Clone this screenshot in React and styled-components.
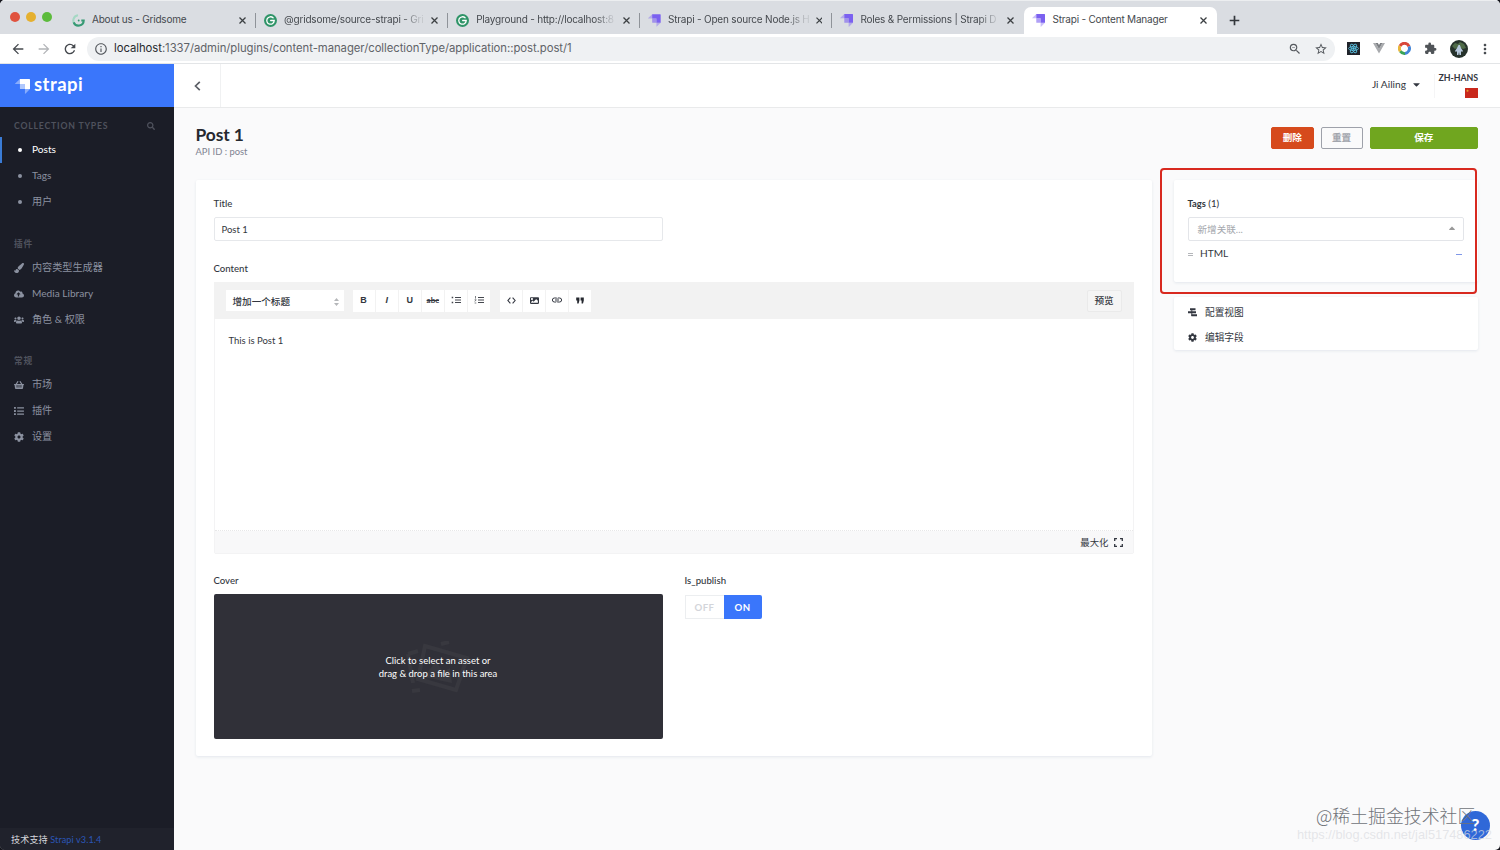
import React from 'react';
import styled, { createGlobalStyle, css } from 'styled-components';
import {
  FaCaretDown,
  FaCaretUp,
  FaCloudUploadAlt,
  FaCog,
  FaImage,
  FaList,
  FaPaintBrush,
  FaSearch,
  FaShoppingBasket,
  FaUsers,
} from 'react-icons/fa';
import {
  MdArrowBack,
  MdArrowForward,
  MdExtension,
  MdInfoOutline,
  MdMoreVert,
  MdRefresh,
  MdStarBorder,
  MdZoomOut,
} from 'react-icons/md';

const GlobalStyle = createGlobalStyle`
  * {
    box-sizing: border-box;
  }

  body {
    margin: 0;
    background: #14151c;
    overflow: hidden;
  }

  button {
    margin: 0;
    padding: 0;
    border: 0;
    background: none;
    font: inherit;
    color: inherit;
  }
`;

const Window = styled.div`
  display: flex;
  flex-direction: column;
  position: relative;
  width: 1500px;
  height: 850px;
  overflow: hidden;
  border-radius: 5px;
  background: #fafafb;
  font-family: Lato, 'Noto Sans CJK SC', sans-serif;
  font-size: 10.2px;
  line-height: 1.25;
  color: #333740;
`;

/* Browser chrome */

const TabStrip = styled.div`
  display: flex;
  align-items: flex-end;
  flex-shrink: 0;
  height: 34px;
  padding-left: 15px;
  border-top: 1px solid #eceef0;
  background: #dadde2;
  font-family: Inter, sans-serif;
`;

const Lights = styled.div`
  display: flex;
  gap: 6px;
  width: 48px;
  height: 22px;
  margin-left: -5px;
  margin-right: 6px;
`;

const Light = styled.i`
  width: 10px;
  height: 10px;
  border-radius: 50%;
  background: ${({ color }) => color};
`;

const TabBox = styled.div`
  display: flex;
  align-items: center;
  position: relative;
  width: 192.1px;
  height: 27px;
  padding: 0 10px 1px 8px;
  font-size: 10px;
  color: #45494e;

  &::after {
    content: '';
    position: absolute;
    right: 0;
    top: 6px;
    width: 1px;
    height: 15px;
    background: ${({ $line }) => ($line ? '#8f9399' : 'transparent')};
  }

  ${({ $active }) =>
    $active &&
    css`
      border-radius: 7px 7px 0 0;
      background: #fff;
    `}
`;

const TabTitle = styled.span`
  flex: 1;
  margin-left: 7px;
  margin-right: 6px;
  padding-bottom: 1px;
  white-space: nowrap;
  letter-spacing: -0.2px;
  mask-image: ${({ $fade }) =>
    $fade ? 'linear-gradient(to right, #000 84%, rgba(0, 0, 0, 0.15) 97%)' : 'none'};
`;

const NewTab = styled.svg`
  margin: 0 0 8px 12px;
`;

const AddressBar = styled.div`
  display: flex;
  align-items: center;
  flex-shrink: 0;
  height: 30px;
  padding: 0 10px;
  border-bottom: 1px solid #e3e5e7;
  background: #fff;
  color: #45494e;

  & > svg {
    flex-shrink: 0;
    width: 16px;
    height: 16px;
    margin-right: 10px;
  }
`;

const Omnibox = styled.div`
  display: flex;
  align-items: center;
  flex: 0 0 1248px;
  height: 24px;
  margin-left: -1px;
  padding: 0 7px;
  border-radius: 12px;
  background: #eff1f3;
  font-family: Inter, sans-serif;

  svg {
    width: 14px;
    height: 14px;
    color: #55595e;
  }
`;

const Url = styled.span`
  flex: 1;
  margin-left: 6px;
  font-size: 11.3px;
  letter-spacing: -0.04px;
  color: #5f6368;

  b {
    font-weight: 400;
    color: #26292c;
  }
`;

const Extensions = styled.div`
  display: flex;
  align-items: center;
  flex-shrink: 0;
  gap: 13px;
  margin-left: 12px;

  & > svg {
    display: block;
  }
`;

/* Strapi layout */

const Body = styled.div`
  display: flex;
  flex: 1;
  min-height: 0;
`;

const Sidebar = styled.nav`
  display: flex;
  flex-direction: column;
  flex-shrink: 0;
  width: 174px;
  background: #1b1d27;
`;

const Brand = styled.div`
  display: flex;
  align-items: center;
  height: 43px;
  padding: 1px 0 0 15px;
  background: #3a76fb;
`;

const BrandName = styled.span`
  margin: -3px 0 0 4px;
  font-family: Lato, sans-serif;
  font-size: 18.5px;
  font-weight: 700;
  letter-spacing: 0.45px;
  color: #fff;
`;

const MenuTitle = styled.div`
  display: flex;
  align-items: center;
  justify-content: space-between;
  height: 23px;
  margin-top: ${({ $top }) => $top}px;
  padding: 1px 19px 0 14px;
  font-size: 8.7px;
  font-weight: 700;
  letter-spacing: 0.8px;
  color: #4f525d;
`;

const MenuItem = styled.div`
  display: flex;
  align-items: center;
  height: 26px;
  padding: 0 0 2px 12px;
  border-left: 2px solid ${({ $active }) => ($active ? '#3a7bd5' : 'transparent')};
  font-size: 10.15px;
  color: ${({ $active }) => ($active ? '#fff' : '#8b91a0')};

  svg {
    position: relative;
    top: 1px;
    width: 10px;
    height: 10px;
  }
`;

const MenuIcon = styled.span`
  display: flex;
  align-items: center;
  width: 18px;
`;

const Dot = styled.i`
  width: 4px;
  height: 4px;
  margin: 1px 0 0 3.5px;
  border-radius: 50%;
  background: currentColor;
`;

const SideFooter = styled.div`
  height: 22px;
  margin-top: auto;
  padding-left: 11px;
  background: #20222c;
  line-height: 23px;
  font-size: 9.1px;
  letter-spacing: 0.1px;
  color: #d5d7dc;

  a {
    color: #2b56b8;
  }
`;

const Main = styled.main`
  flex: 1;
  min-width: 0;
`;

const TopBar = styled.header`
  display: flex;
  align-items: center;
  height: 44px;
  padding-right: 22px;
  border-bottom: 1px solid #e9eaeb;
  background: #fff;
`;

const BackButton = styled.button`
  display: flex;
  align-items: center;
  justify-content: center;
  width: 47px;
  height: 43px;
  border-right: 1px solid #f0f1f2;
`;

const UserMenu = styled.div`
  display: flex;
  align-items: center;
  gap: 5px;
  height: 24px;
  margin-left: auto;
  padding: 0 12px 2px 0;
  border-right: 1px solid #f5f5f6;
`;

const Locale = styled.div`
  display: flex;
  flex-direction: column;
  align-items: flex-end;
  gap: 5px;
  width: 43px;
  font-size: 8.8px;
  font-weight: 700;
  line-height: 10px;
  letter-spacing: -0.05px;
  white-space: nowrap;
`;

const Page = styled.div`
  padding: 17px 22px 0 21.5px;
`;

const PageHead = styled.div`
  display: flex;
  justify-content: space-between;
  height: 55px;
`;

const PageTitle = styled.h1`
  margin: 0;
  font-size: 17.4px;
  font-weight: 700;
  line-height: 19px;
  letter-spacing: -0.1px;
  color: #25282f;
`;

const PageSub = styled.div`
  font-size: 9.4px;
  line-height: 15px;
  color: #7f8391;
`;

const Actions = styled.div`
  display: flex;
  gap: 7px;
  padding-top: 2px;
`;

const Action = styled.button`
  width: ${({ $width }) => $width}px;
  height: 22px;
  border: 1px solid ${({ $border, $bg }) => $border || $bg};
  border-radius: 2px;
  background: ${({ $bg }) => $bg};
  font-size: 9.6px;
  font-weight: 700;
  line-height: 18px;
  color: ${({ $color }) => $color || '#fff'};
`;

const Columns = styled.div`
  display: flex;
  align-items: flex-start;
  gap: 22px;
`;

const Card = styled.section`
  border-radius: 2px;
  background: #fff;
  box-shadow: 0 1px 3px #e3e7ec;
`;

const FormCard = styled(Card)`
  flex: 1;
  height: 576px;
  padding: 17px 18px 0;
`;

const Label = styled.div`
  height: 20px;
  font-size: 9.6px;
  font-weight: 500;
  line-height: 13px;

  b {
    font-size: 9.4px;
  }
`;

const TextInput = styled.div`
  width: 449px;
  height: 24px;
  margin-bottom: 21px;
  padding: 0 7px;
  border: 1px solid #e6e8eb;
  border-radius: 2px;
  font-size: 9.5px;
  line-height: 23px;
`;

const Editor = styled.div`
  height: 272px;
  margin-bottom: 20px;
  border: 1px solid #f3f3f4;
  border-radius: 2px;
`;

const EditorBar = styled.div`
  display: flex;
  align-items: center;
  height: 37px;
  margin: -1px -1px 0;
  padding: 0 12px 0 12px;
  background: #f2f2f2;
`;

const HeadingSelect = styled.div`
  display: flex;
  align-items: center;
  justify-content: space-between;
  width: 118px;
  height: 21px;
  margin-right: 9px;
  padding: 3px 5px 0 7px;
  background: #fff;
  font-size: 9.6px;
  font-weight: 500;
`;

const ToolGroup = styled.div`
  display: flex;
  gap: 1px;
  margin-right: 10px;
`;

const Tool = styled.button`
  display: flex;
  align-items: center;
  justify-content: center;
  width: 22.1px;
  height: 22px;
  padding-bottom: 1px;
  background: #fff;
`;

const Glyph = styled.span`
  padding-top: 1px;
  font-family: 'Liberation Sans', sans-serif;
  font-size: 9px;
  font-weight: 700;
  font-style: ${({ $italic }) => ($italic ? 'italic' : 'normal')};
`;

const Strike = styled.span`
  font-weight: 700;
  font-size: 8px;
  text-decoration: line-through;
`;

const Preview = styled.button`
  width: 35px;
  height: 22px;
  margin-left: auto;
  border: 1px solid #eaeaea;
  border-radius: 2px;
  background: #f5f5f5;
  font-size: 9.6px;
  font-weight: 500;
`;

const EditorText = styled.div`
  height: 212px;
  padding: 16px 14px;
  border-bottom: 1px dotted #e7e7e8;
  font-size: 9.5px;
`;

const EditorFoot = styled.div`
  display: flex;
  align-items: center;
  justify-content: flex-end;
  gap: 5px;
  height: 22px;
  padding: 1px 10px 0 0;
  background: #f8f8f9;
  font-size: 9.4px;
`;

const Pair = styled.div`
  display: flex;
  gap: 22px;
`;

const Field = styled.div`
  flex: 0 0 449px;
`;

const DropZone = styled.div`
  display: flex;
  align-items: center;
  justify-content: center;
  position: relative;
  height: 145px;
  border-radius: 2px;
  background: #303038;
  font-size: 9.45px;
  line-height: 13px;
  text-align: center;
  color: #fff;

  svg {
    position: absolute;
    left: 190px;
    top: 47px;
  }

  span {
    position: relative;
  }
`;

const Toggle = styled.div`
  display: flex;
  width: 77px;
  height: 24px;
  margin-top: 0.5px;
  font-size: 9.6px;
  font-weight: 700;
  letter-spacing: 0.5px;
  text-align: center;
`;

const ToggleOff = styled.span`
  flex: 1;
  border: 1px solid #eceef0;
  border-right: 0;
  line-height: 23px;
  color: #d3d5da;
`;

const ToggleOn = styled.span`
  flex: 1;
  border-radius: 0 2px 2px 0;
  background: #3a76fb;
  line-height: 25px;
  color: #fff;
`;

const Aside = styled.aside`
  display: flex;
  flex-direction: column;
  flex-shrink: 0;
  gap: 15px;
  position: relative;
  width: 304.5px;
`;

const RelationCard = styled(Card)`
  height: 102px;
  padding: 17px 14px 0;
`;

const RelationSelect = styled.div`
  display: flex;
  align-items: center;
  justify-content: space-between;
  height: 24px;
  padding: 1px 6px 0 9px;
  border: 1px solid #e3e5e9;
  border-radius: 2px;
  font-size: 9.6px;
  color: #a4a7ad;

  svg {
    width: 10px;
    height: 10px;
    margin-top: -3px;
    color: #999;
  }
`;

const RelationRow = styled.div`
  display: flex;
  align-items: center;
  height: 25px;
  padding-right: 2.5px;
  font-size: 10.1px;
`;

const Grip = styled.i`
  width: 5px;
  height: 3px;
  margin: 2px 7.5px 0 0;
  border-top: 1px solid #b4b6ba;
  border-bottom: 1px solid #b4b6ba;
`;

const Minus = styled.i`
  width: 6px;
  height: 1.5px;
  margin: 2px 0 0 auto;
  background: #7f97e8;
`;

const LinksCard = styled(Card)`
  height: 53px;
  padding-top: 3px;
`;

const LinkRow = styled.div`
  display: flex;
  align-items: center;
  gap: 8px;
  height: 25px;
  padding-left: 14.5px;
  font-size: 9.7px;

  svg {
    width: 9px;
    height: 9px;
  }
`;

/* Overlays */

const Highlight = styled.div`
  position: absolute;
  left: -14px;
  top: -12px;
  width: 317px;
  height: 126px;
  border: 2px solid #d8291f;
  border-radius: 4px;
`;

const Help = styled.div`
  position: absolute;
  left: 1461px;
  top: 811px;
  width: 29px;
  height: 29px;
  border-radius: 50%;
  background: #2f68d8;
  font-size: 17px;
  font-weight: 900;
  line-height: 28px;
  text-align: center;
  color: #fff;
`;

const Watermark = styled.div`
  position: absolute;
  left: 1316px;
  top: 803px;
  font-family: 'Noto Sans CJK SC', sans-serif;
  font-size: 17.9px;
  font-weight: 300;
  line-height: 24px;
  white-space: nowrap;
  color: #707379;
`;

const WatermarkUrl = styled.div`
  position: absolute;
  left: 1297px;
  top: 828px;
  font-family: 'Liberation Sans', sans-serif;
  font-size: 12.8px;
  line-height: 14px;
  white-space: nowrap;
  color: rgba(218, 220, 225, 0.7);
`;

function StrapiMark({ color, size = 13 }) {
  return (
    <svg width={size} height={size} viewBox="0 0 14 14" fill={color}>
      <path d="M4.6 0H13.4Q14 0 14 .6V9.4H9.3V4.7H4.6z" />
      <path d="M4.6 0V4.7H.3Q-.2 4.7.2 4.3z" opacity=".4" />
      <path d="M4.6 4.7H9.3V9.4H5.2Q4.6 9.4 4.6 8.8z" opacity=".6" />
      <path d="M9.3 9.4H14L9.7 13.7Q9.3 14 9.3 13.5z" opacity=".4" />
    </svg>
  );
}

function GridsomeMark({ solid }) {
  if (solid) {
    return (
      <svg width="13" height="13" viewBox="0 0 14 14">
        <circle cx="7" cy="7" r="7" fill="#2f9468" />
        <path d="M9.8 4.1A4 4 0 1 0 11 7H7.2" fill="none" stroke="#fff" strokeWidth="1.4" strokeLinecap="round" />
      </svg>
    );
  }
  return (
    <svg width="13" height="13" viewBox="0 0 14 14" fill="none" strokeWidth="2.3">
      <path d="M6.5 1.4A5.6 5.6 0 0 0 3.6 11.4" stroke="#a5d8c4" />
      <path d="M1.8 9A5.6 5.6 0 0 0 12.6 7H10" stroke="#379a74" />
      <circle cx="7.2" cy="7" r="1" fill="#379a74" stroke="none" />
    </svg>
  );
}

function TabClose() {
  return (
    <svg width="7" height="7" viewBox="0 0 7 7" stroke="#3c4043" strokeWidth="1.3">
      <path d="M.5.5L6.5 6.5M6.5.5L.5 6.5" />
    </svg>
  );
}

function ExtensionIcons() {
  return (
    <Extensions>
      <svg width="13" height="13" viewBox="0 0 13 13" fill="none" stroke="#5cc5e4" strokeWidth=".8">
        <rect width="13" height="13" fill="#20232a" stroke="none" />
        <ellipse cx="6.5" cy="6.5" rx="5" ry="2" />
        <ellipse cx="6.5" cy="6.5" rx="5" ry="2" transform="rotate(60 6.5 6.5)" />
        <ellipse cx="6.5" cy="6.5" rx="5" ry="2" transform="rotate(120 6.5 6.5)" />
        <circle cx="6.5" cy="6.5" r=".9" fill="#5cc5e4" />
      </svg>
      <svg width="12" height="11" viewBox="0 0 12 11">
        <path d="M0 0h2.6L6 6 9.4 0H12L6 10.6z" fill="#a9abae" />
        <path d="M2.6 0H4.8L6 2 7.2 0H9.4L6 6z" fill="#7c7f83" />
      </svg>
      <svg width="13" height="13" viewBox="0 0 13 13" fill="none" strokeWidth="3">
        <path d="M2 4A5 5 0 0 1 11 4.3" stroke="#d9483b" />
        <path d="M11 4.3A5 5 0 0 1 7 11.4" stroke="#4285d8" />
        <path d="M7 11.4A5 5 0 0 1 2.3 9.2" stroke="#39a356" />
        <path d="M2.3 9.2A5 5 0 0 1 2 4" stroke="#e9b63a" />
      </svg>
      <MdExtension size="13" color="#505458" />
      <svg width="18" height="18" viewBox="0 0 18 18">
        <circle cx="9" cy="9" r="9" fill="#26322b" />
        <path d="M2 6l3-3 3 1 2-2 4 2 2 4-3 1-4-2-4 2z" fill="#4f6b48" />
        <path d="M7 8l1.5-3h1.4L11 8l2 3-1 1-1-1v4H9.5L9 12l-.6 3H7v-4l-1 1-1-1z" fill="#b6c8dc" />
      </svg>
      <MdMoreVert size="16" style={{ marginLeft: -4 }} />
    </Extensions>
  );
}

// Small line icons of the editor toolbar
function BulletIcon({ ordered }) {
  return (
    <svg width="10" height="8" viewBox="0 0 10 8" fill="none" stroke="#44474e">
      <path d="M4 1.5H10M4 4H10M4 6.5H10" strokeWidth="1" />
      {ordered ? (
        <path d="M1.5 0V2.6M.6 3.8H2.2L.8 5.5M.6 7H2.3" strokeWidth=".7" />
      ) : (
        <path d="M.7 1.5H2.2M.7 6.5H2.2" strokeWidth="1.4" />
      )}
    </svg>
  );
}

function CodeIcon() {
  return (
    <svg width="9" height="7" viewBox="0 0 9 7" fill="none" stroke="#333740" strokeWidth="1.1">
      <path d="M3.4.7L.9 3.5l2.5 2.8M5.6.7L8.1 3.5 5.6 6.3" />
    </svg>
  );
}

function LinkIcon() {
  return (
    <svg width="10" height="6" viewBox="0 0 10 6" fill="none" stroke="#333740" strokeWidth="1">
      <path d="M4.2 1H2.4a2 2 0 0 0 0 4H4.2M5.8 1H7.6a2 2 0 0 1 0 4H5.8M3 3H7" />
      <path d="M4.2 1Q5 1 5.4 1.7M5.8 5Q5 5 4.6 4.3" />
    </svg>
  );
}

function QuoteIcon() {
  return (
    <svg width="8" height="7" viewBox="0 0 8 7" fill="#25282f">
      <path d="M.2.4H3.4V3.4L2.6 6.6H1.2V3.4H.2zM4.6.4H7.8V3.4L7 6.6H5.6V3.4H4.6z" />
    </svg>
  );
}

function LayoutIcon() {
  return (
    <svg width="9" height="9" viewBox="0 0 9 9" stroke="#333740" strokeWidth="1.9">
      <path d="M2 1.3H7.5M0 4.2H5.5M3.4 4.2H8M3.4 7.3H9" />
      <path d="M3.8 1V8" strokeWidth=".9" />
    </svg>
  );
}

const tabs = [
  { title: 'About us - Gridsome', icon: <GridsomeMark />, line: true },
  { title: '@gridsome/source-strapi - Gri', icon: <GridsomeMark solid />, line: true, fade: true },
  { title: 'Playground - http://localhost:8', icon: <GridsomeMark solid />, line: true, fade: true },
  { title: 'Strapi - Open source Node.js H', icon: <StrapiMark color="#7b61f0" />, line: true, fade: true },
  { title: 'Roles & Permissions | Strapi D', icon: <StrapiMark color="#7b61f0" />, fade: true },
  { title: 'Strapi - Content Manager', icon: <StrapiMark color="#7b61f0" />, active: true },
];

const plugins = [
  { label: '内容类型生成器', Icon: FaPaintBrush },
  { label: 'Media Library', Icon: FaCloudUploadAlt },
  { label: '角色 & 权限', Icon: FaUsers },
];

const general = [
  { label: '市场', Icon: FaShoppingBasket },
  { label: '插件', Icon: FaList },
  { label: '设置', Icon: FaCog },
];

function Menu({ items }) {
  return items.map(({ label, Icon }) => (
    <MenuItem key={label}>
      <MenuIcon>
        <Icon />
      </MenuIcon>
      {label}
    </MenuItem>
  ));
}

function Browser() {
  return (
    <>
      <TabStrip>
        <Lights>
          <Light color="#e0533f" />
          <Light color="#e5b02f" />
          <Light color="#5cbb3c" />
        </Lights>
        {tabs.map(({ title, icon, line, active, fade }) => (
          <TabBox key={title} $line={line} $active={active}>
            {icon}
            <TabTitle $fade={fade}>{title}</TabTitle>
            <TabClose />
          </TabBox>
        ))}
        <NewTab width="11" height="11" viewBox="0 0 11 11" stroke="#33373c" strokeWidth="1.7">
          <path d="M5.5.7V10.3M.7 5.5H10.3" />
        </NewTab>
      </TabStrip>
      <AddressBar>
        <MdArrowBack />
        <MdArrowForward color="#b3b5b8" />
        <MdRefresh />
        <Omnibox>
          <MdInfoOutline />
          <Url>
            <b>localhost</b>:1337/admin/plugins/content-manager/collectionType/application::post.post/1
          </Url>
          <MdZoomOut style={{ marginRight: 12 }} />
          <MdStarBorder />
        </Omnibox>
        <ExtensionIcons />
      </AddressBar>
    </>
  );
}

function LeftMenu() {
  return (
    <Sidebar>
      <Brand>
        <StrapiMark color="#fff" size={15} />
        <BrandName>strapi</BrandName>
      </Brand>
      <MenuTitle $top={7}>
        COLLECTION TYPES
        <FaSearch size="8" />
      </MenuTitle>
      {['Posts', 'Tags', '用户'].map((label, i) => (
        <MenuItem key={label} $active={i === 0}>
          <MenuIcon>
            <Dot />
          </MenuIcon>
          {label}
        </MenuItem>
      ))}
      <MenuTitle $top={17}>插件</MenuTitle>
      <Menu items={plugins} />
      <MenuTitle $top={16}>常规</MenuTitle>
      <Menu items={general} />
      <SideFooter>
        技术支持 <a>Strapi v3.1.4</a>
      </SideFooter>
    </Sidebar>
  );
}

function WysiwygEditor() {
  return (
    <Editor>
      <EditorBar>
        <HeadingSelect>
          增加一个标题
          <svg width="5" height="8" viewBox="0 0 5 8" fill="#b5b7ba">
            <path d="M0 3L2.5 0 5 3zM0 5L2.5 8 5 5z" />
          </svg>
        </HeadingSelect>
        <ToolGroup>
          <Tool><Glyph>B</Glyph></Tool>
          <Tool><Glyph $italic>I</Glyph></Tool>
          <Tool><Glyph>U</Glyph></Tool>
          <Tool><Strike>abc</Strike></Tool>
          <Tool><BulletIcon /></Tool>
          <Tool><BulletIcon ordered /></Tool>
        </ToolGroup>
        <ToolGroup>
          <Tool><CodeIcon /></Tool>
          <Tool><FaImage size="9" /></Tool>
          <Tool><LinkIcon /></Tool>
          <Tool><QuoteIcon /></Tool>
        </ToolGroup>
        <Preview>预览</Preview>
      </EditorBar>
      <EditorText>This is Post 1</EditorText>
      <EditorFoot>
        最大化
        <svg width="9" height="9" viewBox="0 0 9 9" fill="none" stroke="#333740" strokeWidth="1.3">
          <path d="M.7 3V.7H3M6 .7H8.3V3M8.3 6V8.3H6M3 8.3H.7V6" />
        </svg>
      </EditorFoot>
    </Editor>
  );
}

function App() {
  return (
    <>
      <GlobalStyle />
      <Window>
        <Browser />
        <Body>
          <LeftMenu />
          <Main>
            <TopBar>
              <BackButton>
                <svg width="7" height="10" viewBox="0 0 7 10" fill="none" stroke="#5c5f66" strokeWidth="1.7">
                  <path d="M5.8.8L1.5 5l4.3 4.2" />
                </svg>
              </BackButton>
              <UserMenu>
                Ji Ailing
                <FaCaretDown size="11" />
              </UserMenu>
              <Locale>
                ZH-HANS
                <svg width="13" height="10" viewBox="0 0 13 10">
                  <rect width="13" height="10" fill="#c9281c" />
                  <path d="M2.5 1.3l.4 1h1l-.8.7.3 1-.9-.6-.9.6.3-1-.8-.7h1z" fill="#e8a72c" />
                </svg>
              </Locale>
            </TopBar>
            <Page>
              <PageHead>
                <div>
                  <PageTitle>Post 1</PageTitle>
                  <PageSub>API ID : post</PageSub>
                </div>
                <Actions>
                  <Action $width={42.5} $bg="#d64a1c">删除</Action>
                  <Action $width={42} $bg="#fafafb" $border="#9ea1aa" $color="#a2a5ad">重置</Action>
                  <Action $width={108.5} $bg="#70a61f">保存</Action>
                </Actions>
              </PageHead>
              <Columns>
                <FormCard>
                  <Label>Title</Label>
                  <TextInput>Post 1</TextInput>
                  <Label>Content</Label>
                  <WysiwygEditor />
                  <Pair>
                    <Field>
                      <Label>Cover</Label>
                      <DropZone>
                        <svg width="74" height="56" viewBox="0 0 74 56" fill="none" stroke="#38383f" strokeWidth="4">
                          <path d="M21 5L63 17 52 49 14 38z" />
                          <path d="M20 36L32 20 39 31 46 27 48 42z" fill="#38383f" stroke="none" />
                          <path d="M4 13L14 10M4 13L9 42M8 50L16 49M37 3L45 1" />
                        </svg>
                        <span>
                          Click to select an asset or
                          <br />
                          drag &amp; drop a file in this area
                        </span>
                      </DropZone>
                    </Field>
                    <div>
                      <Label>Is_publish</Label>
                      <Toggle>
                        <ToggleOff>OFF</ToggleOff>
                        <ToggleOn>ON</ToggleOn>
                      </Toggle>
                    </div>
                  </Pair>
                </FormCard>
                <Aside>
                  <RelationCard>
                    <Label><b>Tags</b> (1)</Label>
                    <RelationSelect>
                      新增关联...
                      <FaCaretUp />
                    </RelationSelect>
                    <RelationRow>
                      <Grip />
                      HTML
                      <Minus />
                    </RelationRow>
                  </RelationCard>
                  <LinksCard>
                    <LinkRow>
                      <LayoutIcon />
                      配置视图
                    </LinkRow>
                    <LinkRow>
                      <FaCog />
                      编辑字段
                    </LinkRow>
                  </LinksCard>
                  <Highlight />
                </Aside>
              </Columns>
            </Page>
          </Main>
        </Body>
        <Help>?</Help>
        <Watermark>@稀土掘金技术社区</Watermark>
        <WatermarkUrl>https://blog.csdn.net/jal517486222</WatermarkUrl>
      </Window>
    </>
  );
}

export default App;
